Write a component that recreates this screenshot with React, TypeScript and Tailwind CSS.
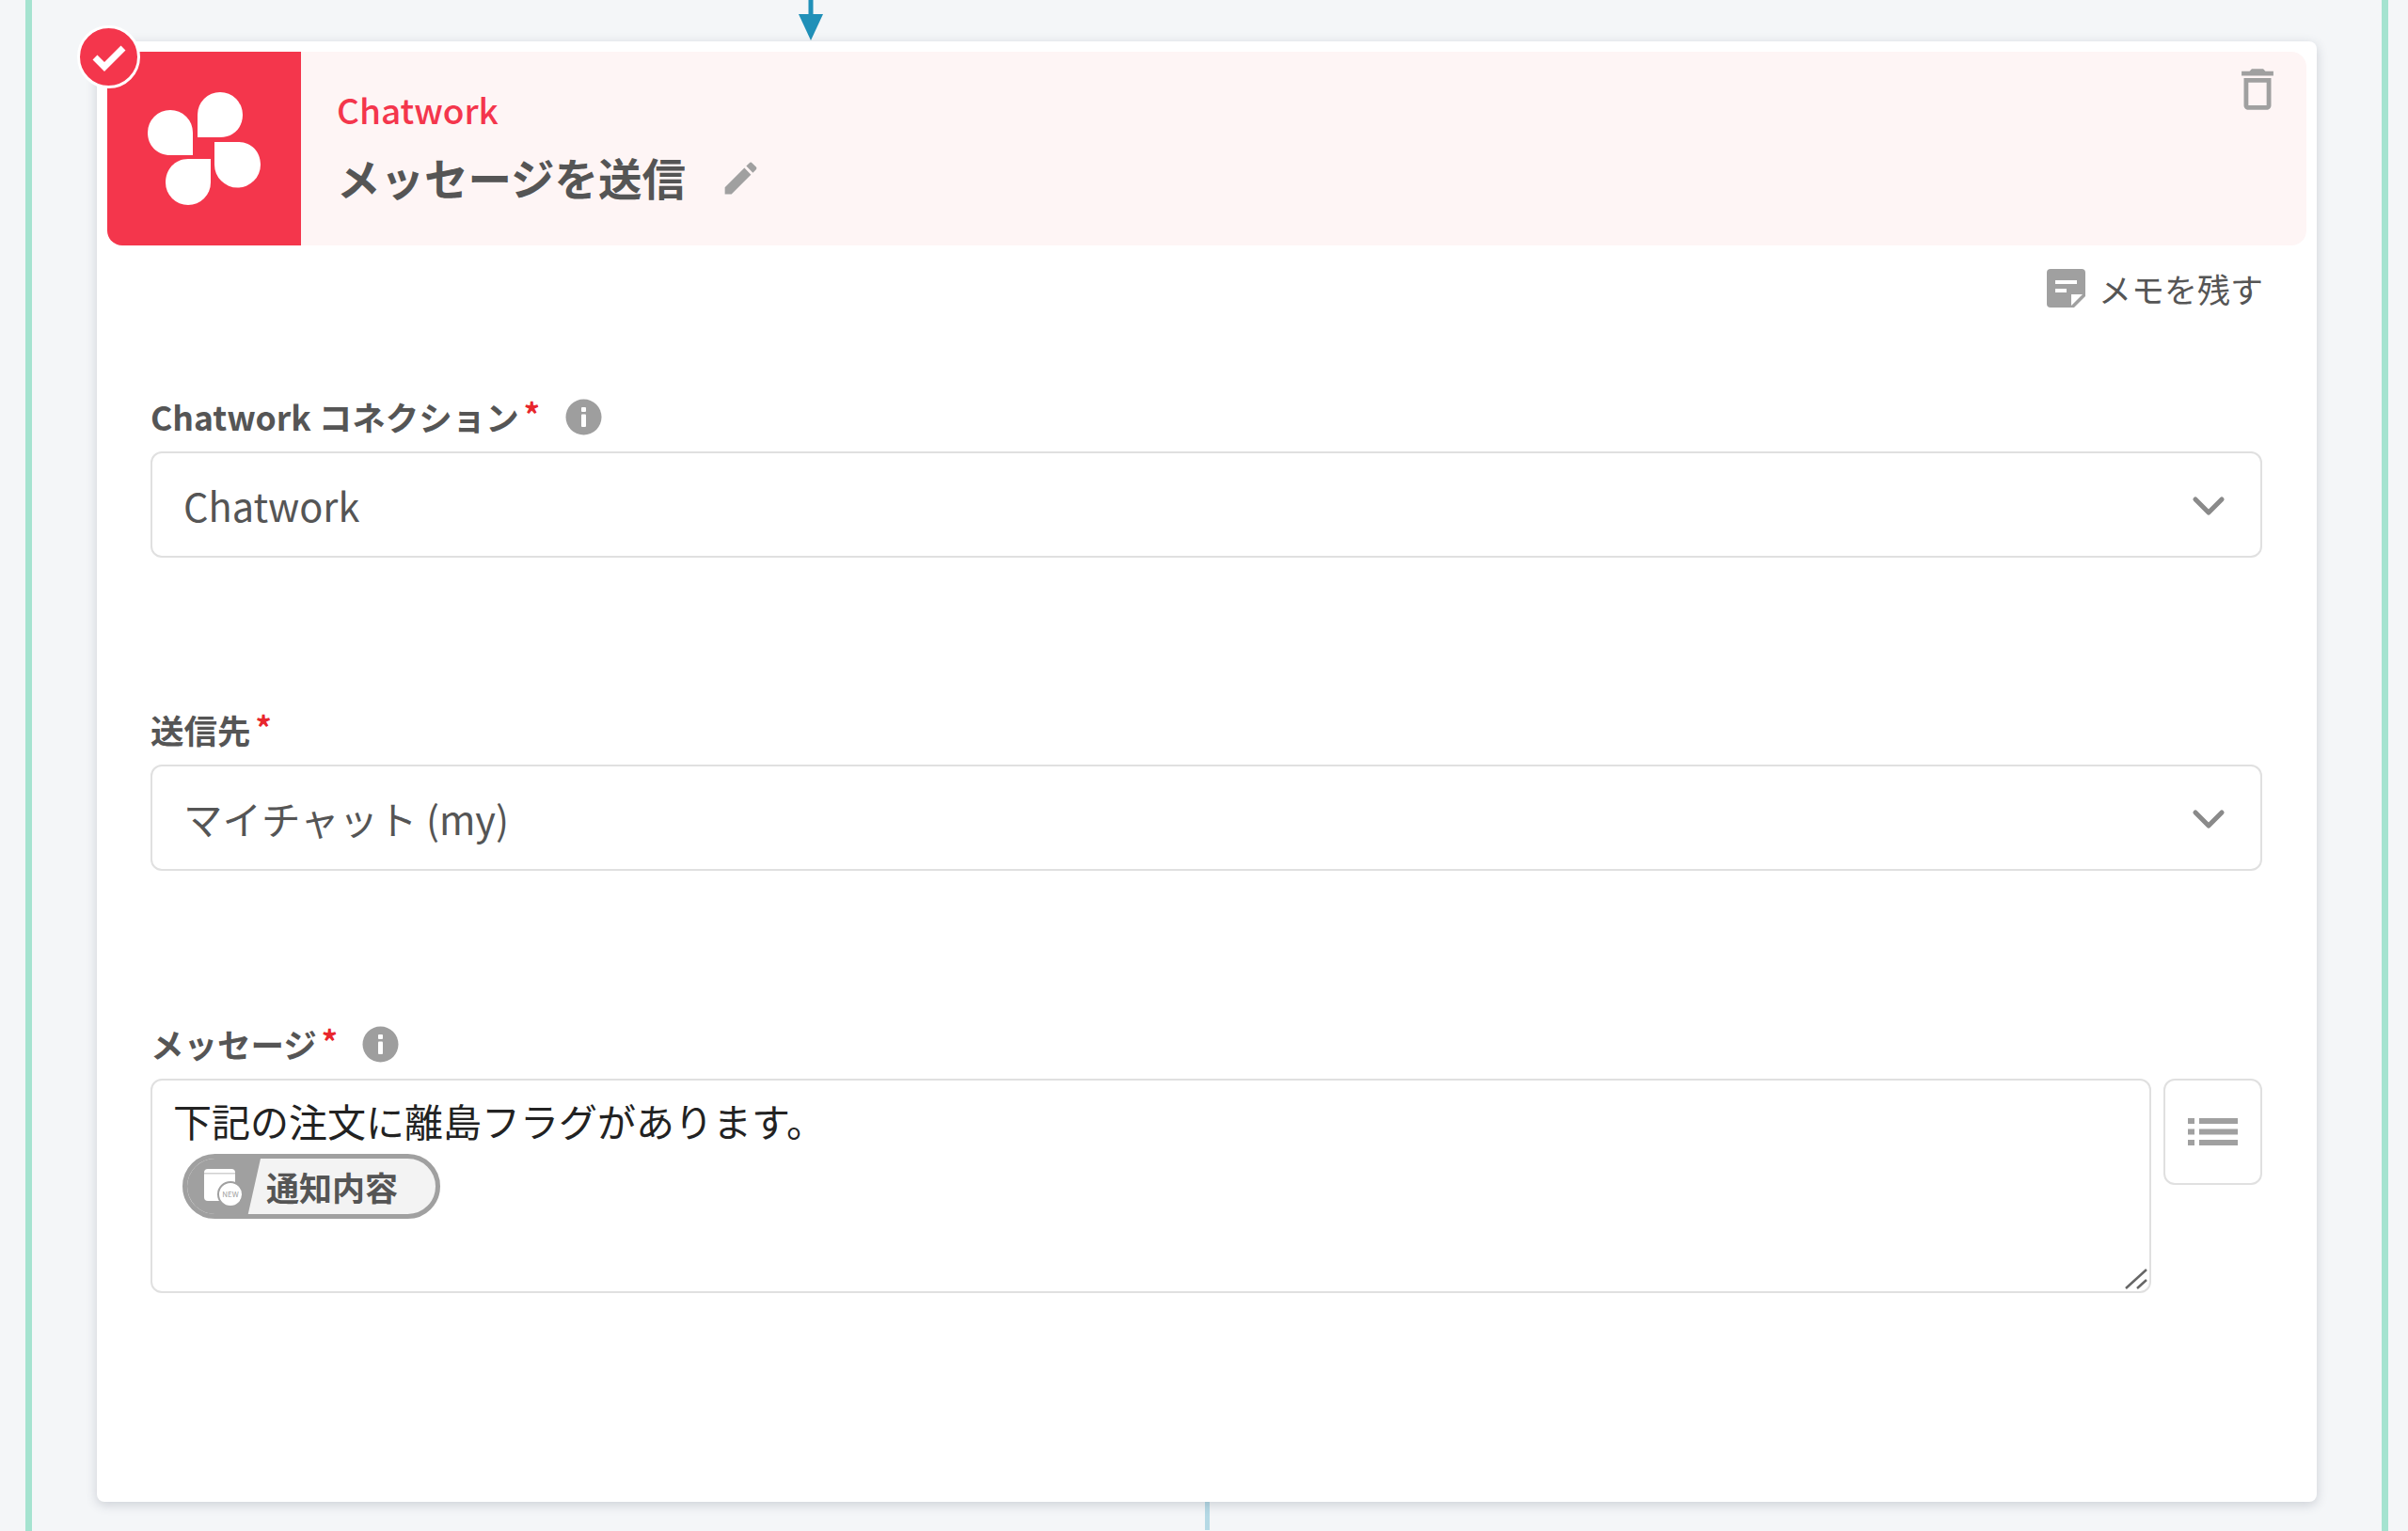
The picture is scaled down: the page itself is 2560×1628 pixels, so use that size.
import type { ReactNode } from "react";
import { ChevronDown } from "lucide-react";

const font = "font-['Noto_Sans_CJK_JP','Noto_Sans',sans-serif]";

function InfoIcon() {
  return (
    <svg width="39" height="39" viewBox="0 0 39 39" className="shrink-0">
      <circle cx="19.5" cy="19.5" r="19" fill="#9e9e9e" />
      <rect x="17" y="9" width="5" height="5" rx="1" fill="#fff" />
      <rect x="17" y="16.5" width="5" height="13.5" rx="1" fill="#fff" />
    </svg>
  );
}

function FieldLabel({ text, info, infoGap }: { text: string; info?: boolean; infoGap?: string }) {
  return (
    <div className="flex h-[46px] items-center mb-[12px] -translate-y-[2px]">
      <span className="text-[35.5px] leading-[46px] font-bold text-[#555]">{text}</span>
      <span className="text-[34px] leading-[46px] font-bold text-[#e8262d] ml-[5px] -mt-[6px]">*</span>
      {info && (
        <span className={infoGap}>
          <InfoIcon />
        </span>
      )}
    </div>
  );
}

function SelectBox({ children }: { children: ReactNode }) {
  return (
    <div className="flex h-[113px] items-center justify-between rounded-[12px] border-2 border-[#e0e0e0] bg-white pl-[33px] pr-[27px] pt-[2px]">
      <span className="text-[41.5px] text-[#555]">{children}</span>
      <ChevronDown size={56} strokeWidth={2.2} color="#8a8a8a" />
    </div>
  );
}

function NotifyPill() {
  return (
    <div className="ml-[10px] mt-[12px] flex h-[69px] w-[274px] items-center overflow-hidden rounded-full border-[5px] border-[#a0a0a0] bg-[#f3f3f3]">
      <div className="flex h-full w-[78px] shrink-0 items-center bg-[#a0a0a0] pl-[18px] [clip-path:polygon(0_0,100%_0,83%_100%,0_100%)]">
        <svg width="42" height="42" viewBox="0 0 42 42">
          <rect x="0" y="2" width="33" height="34" rx="4" fill="#fff" />
          <rect x="0" y="6" width="33" height="1.5" fill="#d0d0d0" />
          <circle cx="28" cy="29" r="13" fill="#fff" stroke="#a0a0a0" strokeWidth="2" />
          <text x="28" y="32" textAnchor="middle" fontSize="8" fill="#a0a0a0">NEW</text>
        </svg>
      </div>
      <span className="ml-[6px] text-[35px] font-bold leading-none text-[#555]">通知内容</span>
    </div>
  );
}

export default function App() {
  return (
    <div className={`min-h-[1628px] overflow-hidden bg-[#f4f6f8] pl-[27px] pr-[21px] ${font}`}>
      <div className="relative min-h-[1628px] border-x-[7px] border-[#a5e3d0] px-[69px] pt-[44px]">
        {/* connector arrow coming from the step above */}
        <svg width="26" height="43" viewBox="0 0 26 43" className="absolute left-[815px] top-0">
          <rect x="10.5" y="0" width="5" height="16" fill="#2090b8" />
          <path d="M0 15h26L13 43z" fill="#2090b8" />
        </svg>

        <div className="relative rounded-[8px] bg-white pb-[222px] pl-[11px] pr-[11px] pt-[11px] shadow-[0_3px_12px_rgba(60,70,90,0.22)]">
          {/* done badge */}
          <div className="absolute -left-[21px] -top-[17px] z-10 flex h-[67px] w-[67px] items-center justify-center rounded-full border-[3px] border-white bg-[#f4364c]">
            <svg width="38" height="30" viewBox="0 0 38 30">
              <path d="M4 15l10 10L34 5" fill="none" stroke="#fff" strokeWidth="7" />
            </svg>
          </div>

          <div className="flex h-[206px] overflow-hidden rounded-[16px] bg-[#fef5f5]">
            <div className="w-[206px] shrink-0 bg-[#f4364c]">
              <svg width="206" height="206" viewBox="114 55 206 206">
                <path d="M210 146V122a24 24 0 0 1 48 0c0 14-10 24-24 24z" fill="#fff" />
                <path d="M205 165h-24c-14 0-24-10-24-24a24 24 0 0 1 48 0z" fill="#fff" />
                <path d="M228 151h25c14 0 24 10 24 24a24.500 24.500 0 0 1-49 0z" fill="#fff" />
                <path d="M224 169v25a24 24 0 0 1-48 0c0-14 10-25 24-25z" fill="#fff" />
              </svg>
            </div>
            <div className="flex flex-1 justify-between pl-[38px] pr-[23px]">
              <div>
                <div className="mt-[37px] text-[37px] font-medium leading-[48px] text-[#f4364c]">Chatwork</div>
                <div className="mt-[17px] flex items-center">
                  <span className="text-[46.5px] font-bold leading-[62px] text-[#555]">メッセージを送信</span>
                  <svg width="45" height="45" viewBox="0 0 24 24" fill="#a0a0a0" className="ml-[36px] mt-[2px]">
                    <path d="M3 17.25V21h3.750L17.810 9.940l-3.750-3.750L3 17.250zM20.710 7.040c.390-.390.390-1.020 0-1.410l-2.340-2.340c-.390-.390-1.020-.390-1.410 0l-1.830 1.830 3.750 3.750 1.830-1.830z" />
                  </svg>
                </div>
              </div>
              <svg width="58" height="58" viewBox="0 0 24 24" fill="#a0a0a0" className="mt-[11px]">
                <path d="M6 19c0 1.100.9 2 2 2h8c1.100 0 2-.9 2-2V7H6v12zM8 9h8v10H8V9zm7.500-5l-1-1h-5l-1 1H5v2h14V4h-3.500z" />
              </svg>
            </div>
          </div>

          <div className="mt-[25px] flex h-[41px] items-center justify-end pr-[46px]">
            <svg width="41" height="41" viewBox="0 0 41 41">
              <path d="M4 0h33a4 4 0 0 1 4 4v25L29 41H4a4 4 0 0 1-4-4V4a4 4 0 0 1 4-4z" fill="#a0a0a0" />
              <rect x="9" y="12" width="23" height="4" fill="#fff" />
              <rect x="9" y="21" width="12" height="4" fill="#fff" />
              <path d="M26 39V27h12z" fill="#fff" />
            </svg>
            <span className="ml-[14px] text-[35px] leading-none text-[#555]">メモを残す</span>
          </div>

          <div className="mt-[95px] pl-[46px] pr-[47px]">
            <FieldLabel text="Chatwork コネクション" info infoGap="ml-[27px]" />
            <SelectBox>Chatwork</SelectBox>

            <div className="mt-[162px]">
              <FieldLabel text="送信先" />
              <SelectBox>マイチャット (my)</SelectBox>
            </div>

            <div className="mt-[163px]">
              <FieldLabel text="メッセージ" info infoGap="ml-[26px]" />
              <div className="flex items-start gap-[13px]">
                <div className="relative h-[228px] flex-1 rounded-[12px] border-2 border-[#e0e0e0] bg-white pl-[22px] pt-[18px]">
                  <div className="text-[41px] leading-[48px] text-[#222]">下記の注文に離島フラグがあります。</div>
                  <NotifyPill />
                  <svg width="24" height="24" viewBox="0 0 24 24" className="absolute bottom-[1px] right-[2px]">
                    <path d="M1 22L23 2M13 22l10-9" stroke="#666" strokeWidth="2.500" fill="none" />
                  </svg>
                </div>
                <div className="flex h-[113px] w-[105px] shrink-0 items-center justify-center rounded-[12px] border-2 border-[#e0e0e0] bg-white">
                  <svg width="53" height="29" viewBox="0 0 53 29" fill="#a0a0a0">
                    <rect x="0" y="0" width="7" height="6" />
                    <rect x="12" y="0" width="41" height="6" />
                    <rect x="0" y="11.500" width="7" height="6" />
                    <rect x="12" y="11.500" width="41" height="6" />
                    <rect x="0" y="23" width="7" height="6" />
                    <rect x="12" y="23" width="41" height="6" />
                  </svg>
                </div>
              </div>
            </div>
          </div>
        </div>

        {/* connector to the next step */}
        <div className="mx-auto h-[30px] w-[5px] bg-[#b5d9e5]" />
      </div>
    </div>
  );
}
